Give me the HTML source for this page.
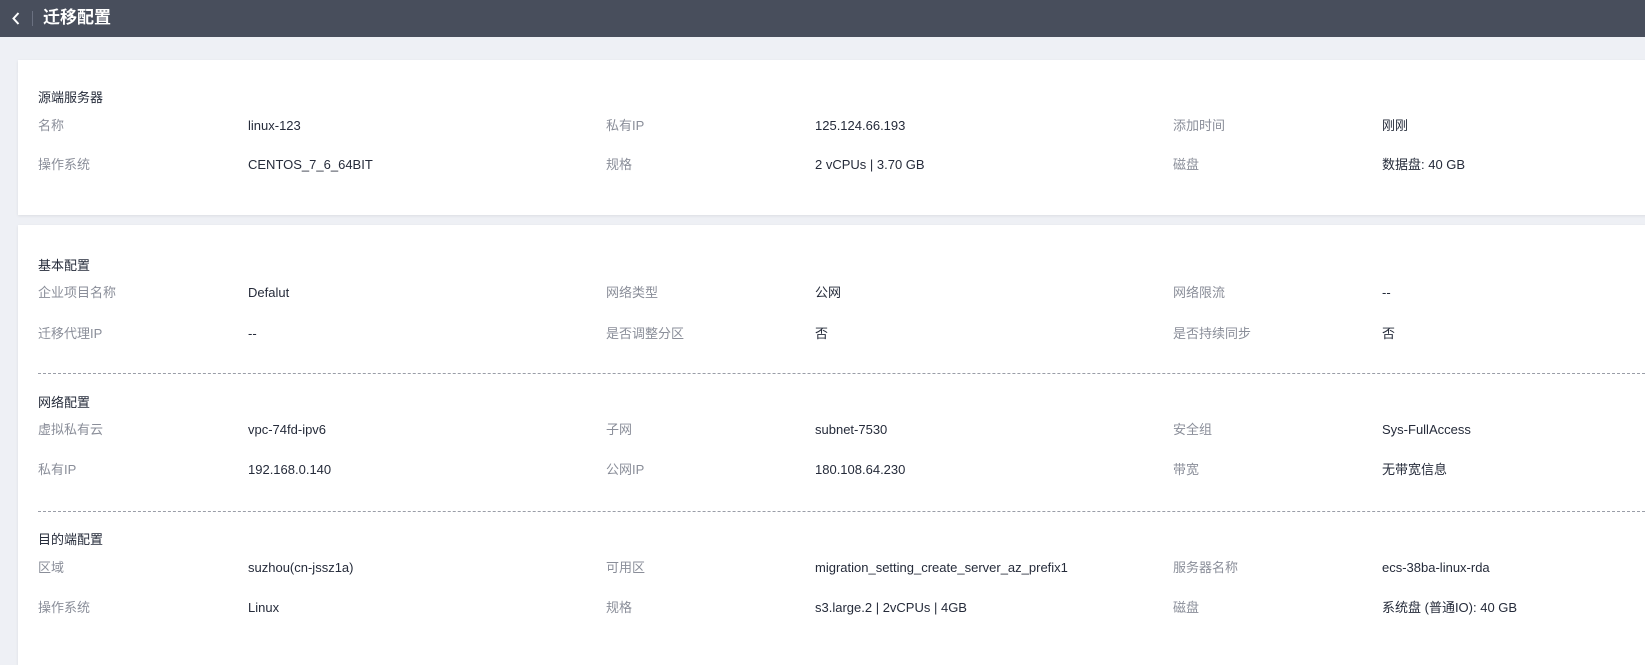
<!DOCTYPE html>
<html><head><meta charset="utf-8"><style>
*{margin:0;padding:0;box-sizing:border-box}
body{width:1645px;height:657px;overflow:hidden;background:#eef0f5;font-family:"Liberation Sans","Noto Sans CJK SC",sans-serif;font-size:13px;position:relative}
.hd{position:absolute;left:0;top:0;width:1645px;height:37px;background:#484e5c}
.hd .t{position:absolute;left:43px;top:8px;color:#fff;font-size:17px;font-weight:bold;line-height:20px}
.hd .sep{position:absolute;left:32px;top:11px;width:1px;height:15px;background:#6a7080}
.card{position:absolute;left:18px;width:1640px;background:#fff;box-shadow:0 1px 3px rgba(0,0,0,.08)}
.a{position:absolute;line-height:16px;white-space:nowrap}
.h{color:#252b3a}
.l{color:#8a8e99}
.v{color:#252b3a}
.d{position:absolute;left:38px;width:1607px;border-top:1px dashed #9a9ea8}
</style></head><body>
<div class="hd">
<svg style="position:absolute;left:11px;top:11px" width="10" height="15" viewBox="0 0 10 15"><path d="M7.5 2 L2.5 7.5 L7.5 13" stroke="#fff" stroke-width="2" fill="none"/></svg>
<div class="sep"></div>
<div class="t">迁移配置</div>
</div>
<div class="card" style="top:60px;height:155px"></div>
<div class="card" style="top:225px;height:440px"></div>
<div class="d" style="top:373px"></div>
<div class="d" style="top:511px"></div>

<div class="a h" style="left:38px;top:90px">源端服务器</div>
<div class="a l" style="left:38px;top:118px">名称</div><div class="a v" style="left:248px;top:118px">linux-123</div>
<div class="a l" style="left:606px;top:118px">私有IP</div><div class="a v" style="left:815px;top:118px">125.124.66.193</div>
<div class="a l" style="left:1173px;top:118px">添加时间</div><div class="a v" style="left:1382px;top:118px">刚刚</div>
<div class="a l" style="left:38px;top:157px">操作系统</div><div class="a v" style="left:248px;top:157px">CENTOS_7_6_64BIT</div>
<div class="a l" style="left:606px;top:157px">规格</div><div class="a v" style="left:815px;top:157px">2 vCPUs | 3.70 GB</div>
<div class="a l" style="left:1173px;top:157px">磁盘</div><div class="a v" style="left:1382px;top:157px">数据盘: 40 GB</div>

<div class="a h" style="left:38px;top:258px">基本配置</div>
<div class="a l" style="left:38px;top:285px">企业项目名称</div><div class="a v" style="left:248px;top:285px">Defalut</div>
<div class="a l" style="left:606px;top:285px">网络类型</div><div class="a v" style="left:815px;top:285px">公网</div>
<div class="a l" style="left:1173px;top:285px">网络限流</div><div class="a v" style="left:1382px;top:285px">--</div>
<div class="a l" style="left:38px;top:326px">迁移代理IP</div><div class="a v" style="left:248px;top:326px">--</div>
<div class="a l" style="left:606px;top:326px">是否调整分区</div><div class="a v" style="left:815px;top:326px">否</div>
<div class="a l" style="left:1173px;top:326px">是否持续同步</div><div class="a v" style="left:1382px;top:326px">否</div>

<div class="a h" style="left:38px;top:395px">网络配置</div>
<div class="a l" style="left:38px;top:422px">虚拟私有云</div><div class="a v" style="left:248px;top:422px">vpc-74fd-ipv6</div>
<div class="a l" style="left:606px;top:422px">子网</div><div class="a v" style="left:815px;top:422px">subnet-7530</div>
<div class="a l" style="left:1173px;top:422px">安全组</div><div class="a v" style="left:1382px;top:422px">Sys-FullAccess</div>
<div class="a l" style="left:38px;top:462px">私有IP</div><div class="a v" style="left:248px;top:462px">192.168.0.140</div>
<div class="a l" style="left:606px;top:462px">公网IP</div><div class="a v" style="left:815px;top:462px">180.108.64.230</div>
<div class="a l" style="left:1173px;top:462px">带宽</div><div class="a v" style="left:1382px;top:462px">无带宽信息</div>

<div class="a h" style="left:38px;top:532px">目的端配置</div>
<div class="a l" style="left:38px;top:560px">区域</div><div class="a v" style="left:248px;top:560px">suzhou(cn-jssz1a)</div>
<div class="a l" style="left:606px;top:560px">可用区</div><div class="a v" style="left:815px;top:560px">migration_setting_create_server_az_prefix1</div>
<div class="a l" style="left:1173px;top:560px">服务器名称</div><div class="a v" style="left:1382px;top:560px">ecs-38ba-linux-rda</div>
<div class="a l" style="left:38px;top:600px">操作系统</div><div class="a v" style="left:248px;top:600px">Linux</div>
<div class="a l" style="left:606px;top:600px">规格</div><div class="a v" style="left:815px;top:600px">s3.large.2 | 2vCPUs | 4GB</div>
<div class="a l" style="left:1173px;top:600px">磁盘</div><div class="a v" style="left:1382px;top:600px">系统盘 (普通IO): 40 GB</div>
</body></html>
